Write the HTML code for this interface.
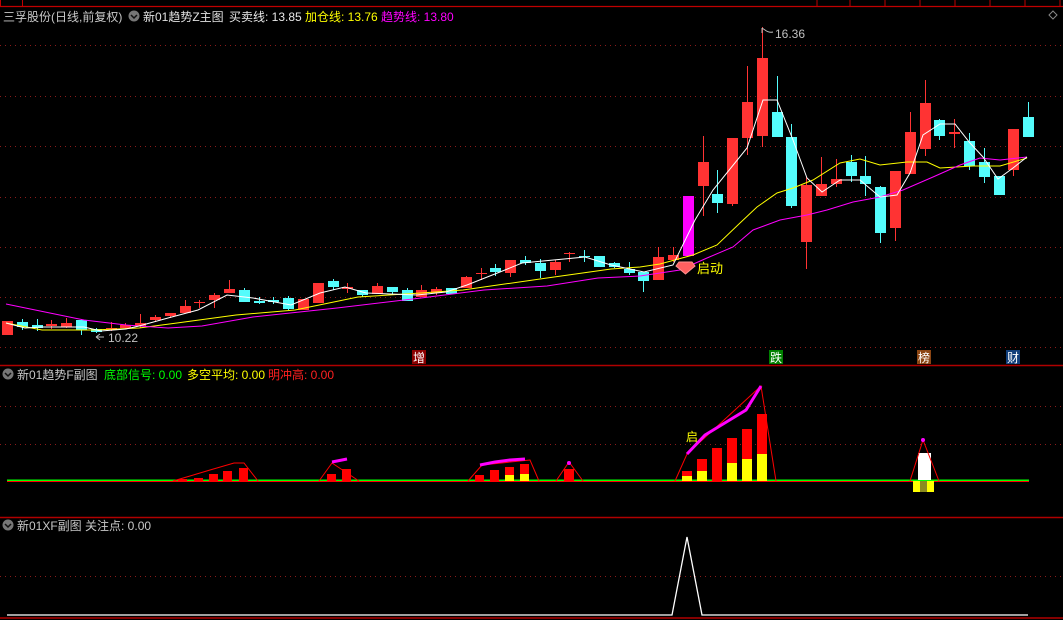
<!DOCTYPE html>
<html><head><meta charset="utf-8"><style>
html,body{margin:0;padding:0;background:#000;width:1063px;height:620px;overflow:hidden}
svg{display:block}
text{font-family:"Liberation Sans","Noto Sans CJK SC",sans-serif}
</style></head><body>
<svg id="s" width="1063" height="620" viewBox="0 0 1063 620" xmlns="http://www.w3.org/2000/svg">
<rect width="1063" height="620" fill="#000"/>
<line x1="0" y1="6.5" x2="1063" y2="6.5" stroke="#c00000" stroke-width="1.2"/>
<rect x="0.5" y="-2" width="22" height="8.5" fill="none" stroke="#c00000"/>
<g stroke="#c00000"><line x1="817" y1="0" x2="817" y2="6"/><line x1="850" y1="0" x2="850" y2="6"/><line x1="885" y1="0" x2="885" y2="6"/><line x1="920" y1="0" x2="920" y2="6"/><line x1="955" y1="0" x2="955" y2="6"/><line x1="990" y1="0" x2="990" y2="6"/><line x1="1025" y1="0" x2="1025" y2="6"/><line x1="1060" y1="0" x2="1060" y2="6"/></g>
<path d="M1053 11 l4 4 -4 4 -4 -4z" fill="none" stroke="#888"/>
<g stroke="#8b1a1a" stroke-dasharray="1,4" stroke-width="1">
<line x1="0" y1="45.5" x2="1063" y2="45.5"/><line x1="0" y1="96.5" x2="1063" y2="96.5"/><line x1="0" y1="146.5" x2="1063" y2="146.5"/><line x1="0" y1="197.5" x2="1063" y2="197.5"/><line x1="0" y1="247.5" x2="1063" y2="247.5"/><line x1="0" y1="297.5" x2="1063" y2="297.5"/><line x1="0" y1="347.5" x2="1063" y2="347.5"/>
<line x1="0" y1="406.5" x2="1063" y2="406.5"/><line x1="0" y1="444.5" x2="1063" y2="444.5"/>
<line x1="0" y1="576.5" x2="1063" y2="576.5"/>
</g>
<line x1="0" y1="365.5" x2="1063" y2="365.5" stroke="#b00000" stroke-width="1.5"/>
<line x1="0" y1="517.5" x2="1063" y2="517.5" stroke="#b00000" stroke-width="1.5"/>
<line x1="0" y1="618" x2="1063" y2="618" stroke="#b00000" stroke-width="1.5"/>
<text x="3" y="21" font-size="12" fill="#c8c8c8">三孚股份(日线,前复权)</text>
<circle cx="134" cy="16" r="5.5" fill="#777"/><path d="M131 15 l3 3 3 -3" stroke="#111" stroke-width="1.5" fill="none"/>
<text x="143" y="21" font-size="12" fill="#e0e0e0">新01趋势Z主图</text>
<text x="229" y="21" font-size="12" fill="#e8e8e8">买卖线: 13.85</text>
<text x="305" y="21" font-size="12" fill="#ffff00">加仓线: 13.76</text>
<text x="381" y="21" font-size="12" fill="#ff00ff">趋势线: 13.80</text>
<g id="candles"></g>
<polyline fill="none" stroke="#ffff00" stroke-width="1" points="6,323 42,330 93,330 139,328 177,323 236,315 295,310 358,297 421,293 463,290 547,278 611,269 640,267 660,264 693,255 717,245 740,223 757,207 777,193 793,188 813,180 840,163 860,159 880,165 907,162 927,162 940,168 973,166 1000,166 1027,158"/>
<polyline fill="none" stroke="#ff00ff" stroke-width="1" points="6,304 84,320 126,325 168,328 202,326 253,317 337,308 421,298 484,290 547,286 598,278 640,276 680,270 707,258 733,247 753,230 780,220 807,215 827,210 853,202 880,197 903,190 933,177 960,165 980,158 1000,160 1027,157"/>
<polyline fill="none" stroke="#ffffff" stroke-width="1" points="6,323 25,328 42,327 84,327 101,331 126,329 139,326 168,318 198,310 227,295 253,298 291,305 320,293 345,287 366,293 417,295 446,292 467,285 505,270 522,263 585,257 611,265 644,272 673,265 695,220 713,190 747,148 763,100 777,100 793,140 807,178 822,192 840,180 860,180 880,197 897,195 910,173 923,135 940,124 955,124 970,143 983,157 998,179 1013,168 1027,157"/>
<path d="M762 33 v-5 M762 28 l3 2 M765 30 q4 3 8 2" stroke="#bbb" fill="none"/>
<text x="775" y="38" font-size="12" fill="#c0c0c0">16.36</text>
<path d="M96 337 l4 -3 M96 337 l4 3 M96 337 h8" stroke="#bbb" fill="none"/>
<text x="108" y="342" font-size="12" fill="#c0c0c0">10.22</text>
<path d="M679 262 h13 l3 4 -9.5 8 -9.5 -8z" fill="#ff6060" stroke="#ff9090"/>
<text x="697" y="273" font-size="13" fill="#ffff00">启动</text>
<rect x="412" y="350" width="14" height="14" fill="#8b0000"/><text x="413" y="362" font-size="12" fill="#fff">增</text>
<rect x="769" y="350" width="14" height="14" fill="#008000"/><text x="770" y="362" font-size="12" fill="#fff">跌</text>
<rect x="917" y="350" width="14" height="14" fill="#8b4513"/><text x="918" y="362" font-size="12" fill="#fff">榜</text>
<rect x="1006" y="350" width="14" height="14" fill="#103e7a"/><text x="1007" y="362" font-size="12" fill="#fff">财</text>
<circle cx="8" cy="374" r="5.5" fill="#777"/><path d="M5 373 l3 3 3 -3" stroke="#111" stroke-width="1.5" fill="none"/>
<text x="17" y="379" font-size="12" fill="#c8c8c8">新01趋势F副图</text>
<text x="104" y="379" font-size="12" fill="#00ff00">底部信号: 0.00</text>
<text x="187" y="379" font-size="12" fill="#ffff00">多空平均: 0.00</text>
<text x="268" y="379" font-size="12" fill="#ff2020">明冲高: 0.00</text>
<line x1="7" y1="480.5" x2="1029" y2="480.5" stroke="#00ff00" stroke-width="2"/>
<line x1="7" y1="481.5" x2="1029" y2="481.5" stroke="#ff0000" stroke-width="1"/>
<g fill="#ff0000">
<rect x="178" y="479" width="9" height="2"/><rect x="194" y="478" width="9" height="3"/><rect x="209" y="474" width="9" height="7"/><rect x="223" y="471" width="9" height="10"/><rect x="239" y="468" width="9" height="13"/>
<rect x="327" y="474" width="9" height="7"/><rect x="342" y="469" width="9" height="12"/>
<rect x="475" y="475" width="9" height="6"/><rect x="490" y="470" width="9" height="11"/><rect x="505" y="467" width="9" height="14"/><rect x="520" y="464" width="9" height="17"/>
<rect x="564" y="469" width="10" height="12"/>
<rect x="682" y="471" width="10" height="10"/><rect x="697" y="459" width="10" height="22"/><rect x="712" y="448" width="10" height="33"/><rect x="727" y="438" width="10" height="43"/><rect x="742" y="429" width="10" height="52"/><rect x="757" y="414" width="10" height="67"/>
</g>
<g fill="#ffff00">
<rect x="505" y="475" width="9" height="6"/><rect x="520" y="474" width="9" height="7"/>
<rect x="682" y="476" width="10" height="5"/><rect x="697" y="471" width="10" height="10"/><rect x="727" y="463" width="10" height="18"/><rect x="742" y="459" width="10" height="22"/><rect x="757" y="454" width="10" height="27"/>
<rect x="913" y="481" width="21" height="11"/>
</g>
<rect x="920" y="481" width="7" height="11" fill="#8a8a20"/>
<rect x="918" y="453" width="13" height="27" fill="#fff"/>
<g fill="none" stroke="#ff0000" stroke-width="1">
<polyline points="173,481 190,476 210,470 234,463 244,463 258,481"/>
<polyline points="319,481 332,463 359,481"/>
<polyline points="468,481 482,465 530,460 539,481"/>
<polyline points="556,481 569,462 583,481"/>
<polyline points="675,481 687,454 761,386 776,481"/>
<polyline points="910,481 923,440 939,481"/>
</g>
<g fill="none" stroke="#ff00ff" stroke-width="3">
<polyline points="332,462 347,459"/>
<polyline points="480,465 495,462 510,460 525,459"/>
<polyline points="687,454 705,435 746,410 761,386"/>
</g>
<circle cx="569" cy="463" r="2" fill="#ff00ff"/><circle cx="923" cy="440" r="2" fill="#ff00ff"/>
<text x="686" y="441" font-size="12" fill="#ffff00">启</text>
<circle cx="8" cy="525" r="5.5" fill="#777"/><path d="M5 524 l3 3 3 -3" stroke="#111" stroke-width="1.5" fill="none"/>
<text x="17" y="530" font-size="12" fill="#c8c8c8">新01XF副图 关注点: 0.00</text>
<polyline fill="none" stroke="#fff" stroke-width="1.3" points="7,615 672,615 687,537 702,615 1028,615"/>
</svg>
<script>
var d=[[321,335,321,335,'r'],[322,327,319,330,'c'],[325,328,319,331,'c'],[324,326,320,329,'r'],[323,327,318,328,'r'],[320,330,319,335,'c'],[329,332,328,333,'c'],[328,329,322,331,'r'],[325,328,323,329,'r'],[323,326,314,328,'r'],[317,320,315,322,'r'],[313,316,313,318,'r'],[306,313,300,313,'r'],[302,303,300,308,'r'],[295,300,293,308,'r'],[289,293,280,293,'r'],[290,302,288,302,'c'],[301,303,297,304,'c'],[300,302,297,304,'c'],[298,309,296,310,'c'],[299,310,299,310,'r'],[283,303,283,303,'r'],[281,287,279,290,'c'],[287,289,283,293,'r'],[290,295,290,297,'c'],[286,294,283,294,'r'],[287,292,287,295,'c'],[290,301,288,301,'c'],[290,297,285,297,'r'],[289,293,287,295,'r'],[288,294,288,294,'c'],[277,288,276,288,'r'],[273,274,268,280,'r'],[268,272,264,276,'c'],[260,273,260,277,'r'],[260,263,256,265,'c'],[263,271,259,278,'c'],[262,270,260,275,'r'],[253,254,252,262,'r'],[256,257,250,262,'c'],[256,267,256,267,'c'],[263,267,262,268,'c'],[269,273,262,275,'c'],[272,281,272,292,'c'],[257,280,247,280,'r'],[255,260,247,262,'r'],[196,256,196,256,'m'],[162,186,136,216,'r'],[194,203,170,213,'c'],[138,204,138,206,'r'],[102,138,66,155,'r'],[58,136,27,147,'r'],[112,137,76,137,'c'],[137,206,124,208,'c'],[185,242,177,269,'r'],[184,196,157,196,'r'],[179,184,159,187,'r'],[162,176,155,182,'c'],[176,184,156,196,'c'],[187,233,186,243,'c'],[171,228,171,241,'r'],[132,174,112,174,'r'],[103,149,80,156,'r'],[120,136,119,140,'c'],[132,134,119,148,'r'],[141,166,133,170,'c'],[162,177,148,183,'c'],[176,195,176,195,'c'],[129,170,129,176,'r'],[117,137,102,137,'c']];
var col={r:'#ff3333',c:'#54fcfc',m:'#ff00ff'};var h='';
d.forEach(function(c,i){var x=Math.round(7+i*14.8);var f=col[c[4]];
h+='<line x1="'+(x+0.5)+'" y1="'+c[2]+'" x2="'+(x+0.5)+'" y2="'+c[3]+'" stroke="'+f+'"/>';
h+='<rect x="'+(x-5)+'" y="'+c[0]+'" width="11" height="'+Math.max(1,c[1]-c[0])+'" fill="'+f+'"/>';});
document.getElementById('candles').innerHTML=h;
</script>
</body></html>
